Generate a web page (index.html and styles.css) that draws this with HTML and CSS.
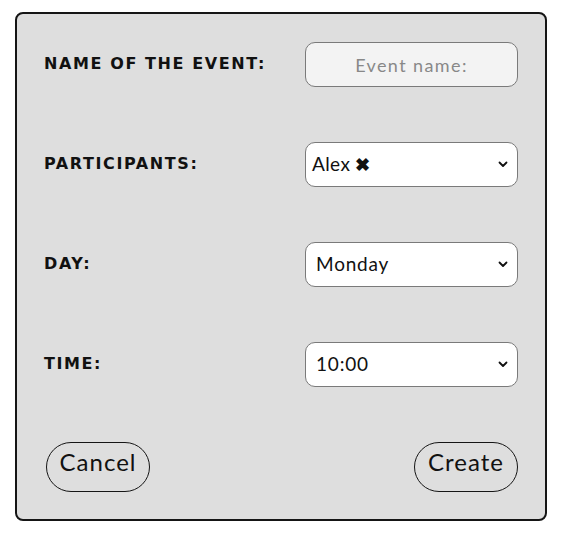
FILE: index.html
```html
<!DOCTYPE html>
<html>
<head>
<meta charset="utf-8">
<link rel="stylesheet" href="styles.css">
</head>
<body>
<form class="card">
  <div class="row">
    <label class="label">NAME OF THE EVENT:</label>
    <input class="field text" type="text" placeholder="Event name:">
  </div>
  <div class="row">
    <label class="label">PARTICIPANTS:</label>
    <div class="field select multi">
      <span class="tag">Alex <span class="x">&#10006;</span></span>
      <svg class="chev" width="10" height="7" viewBox="0 0 10 7"><path d="M1.5 1.5 L5 5 L8.5 1.5" fill="none" stroke="#111" stroke-width="1.8" stroke-linecap="round" stroke-linejoin="round"/></svg>
    </div>
  </div>
  <div class="row">
    <label class="label">DAY:</label>
    <div class="field select">
      <span class="val">Monday</span>
      <svg class="chev" width="10" height="7" viewBox="0 0 10 7"><path d="M1.5 1.5 L5 5 L8.5 1.5" fill="none" stroke="#111" stroke-width="1.8" stroke-linecap="round" stroke-linejoin="round"/></svg>
    </div>
  </div>
  <div class="row">
    <label class="label">TIME:</label>
    <div class="field select">
      <span class="val">10:00</span>
      <svg class="chev" width="10" height="7" viewBox="0 0 10 7"><path d="M1.5 1.5 L5 5 L8.5 1.5" fill="none" stroke="#111" stroke-width="1.8" stroke-linecap="round" stroke-linejoin="round"/></svg>
    </div>
  </div>
  <div class="actions">
    <button type="button" class="btn">Cancel</button>
    <button type="button" class="btn">Create</button>
  </div>
</form>
</body>
</html>
```
FILE: styles.css
```css
* { box-sizing: border-box; }
html, body { margin: 0; padding: 0; background: #fff; }
body {
  font-family: Lato, "Noto Sans", sans-serif;
  color: #111;
  padding: 12px 0 0 15px;
}
.card {
  width: 532px;
  height: 509px;
  background: #dedede;
  border: 2px solid #151515;
  border-radius: 8px;
  padding: 28px 27px 29px 28px;
  display: flex;
  flex-direction: column;
  gap: 55px;
  margin: 0;
}
.row {
  display: flex;
  align-items: center;
  justify-content: space-between;
  height: 45px;
}
.label {
  font-family: "DejaVu Sans", sans-serif;
  font-weight: 700;
  font-size: 16px;
  letter-spacing: 1.6px;
  margin-left: -1px;
  padding-bottom: 2px;
}
.field {
  width: 213px;
  height: 45px;
  border: 1px solid #7a7a7a;
  border-radius: 10px;
  background: #fff;
  font-family: Lato, "Noto Sans", sans-serif;
  font-size: 19px;
  letter-spacing: 0.8px;
  color: #111;
}
.text {
  background: #f3f3f3;
  text-align: center;
  padding: 0 10px;
  outline: none;
  font-size: 18px;
  letter-spacing: 1.4px;
}
.text::placeholder { color: #888; }
.select {
  display: flex;
  align-items: center;
  justify-content: space-between;
  padding: 0 9px 2px 10px;
}
.multi { padding-left: 6px; }
.tag { display: flex; align-items: center; gap: 5px; letter-spacing: 0.4px; }
.x { font-size: 18px; font-weight: 700; }
.chev { display: block; margin-top: 2px; }
.actions {
  display: flex;
  justify-content: space-between;
  padding-left: 1px;
}
.btn {
  width: 104px;
  height: 50px;
  border: 1.5px solid #151515;
  border-radius: 25px;
  background: transparent;
  font-family: Lato, "Noto Sans", sans-serif;
  font-size: 24px;
  line-height: 1;
  color: #111;
  padding: 0 0 11px 0;
  letter-spacing: 1px;
}
```
